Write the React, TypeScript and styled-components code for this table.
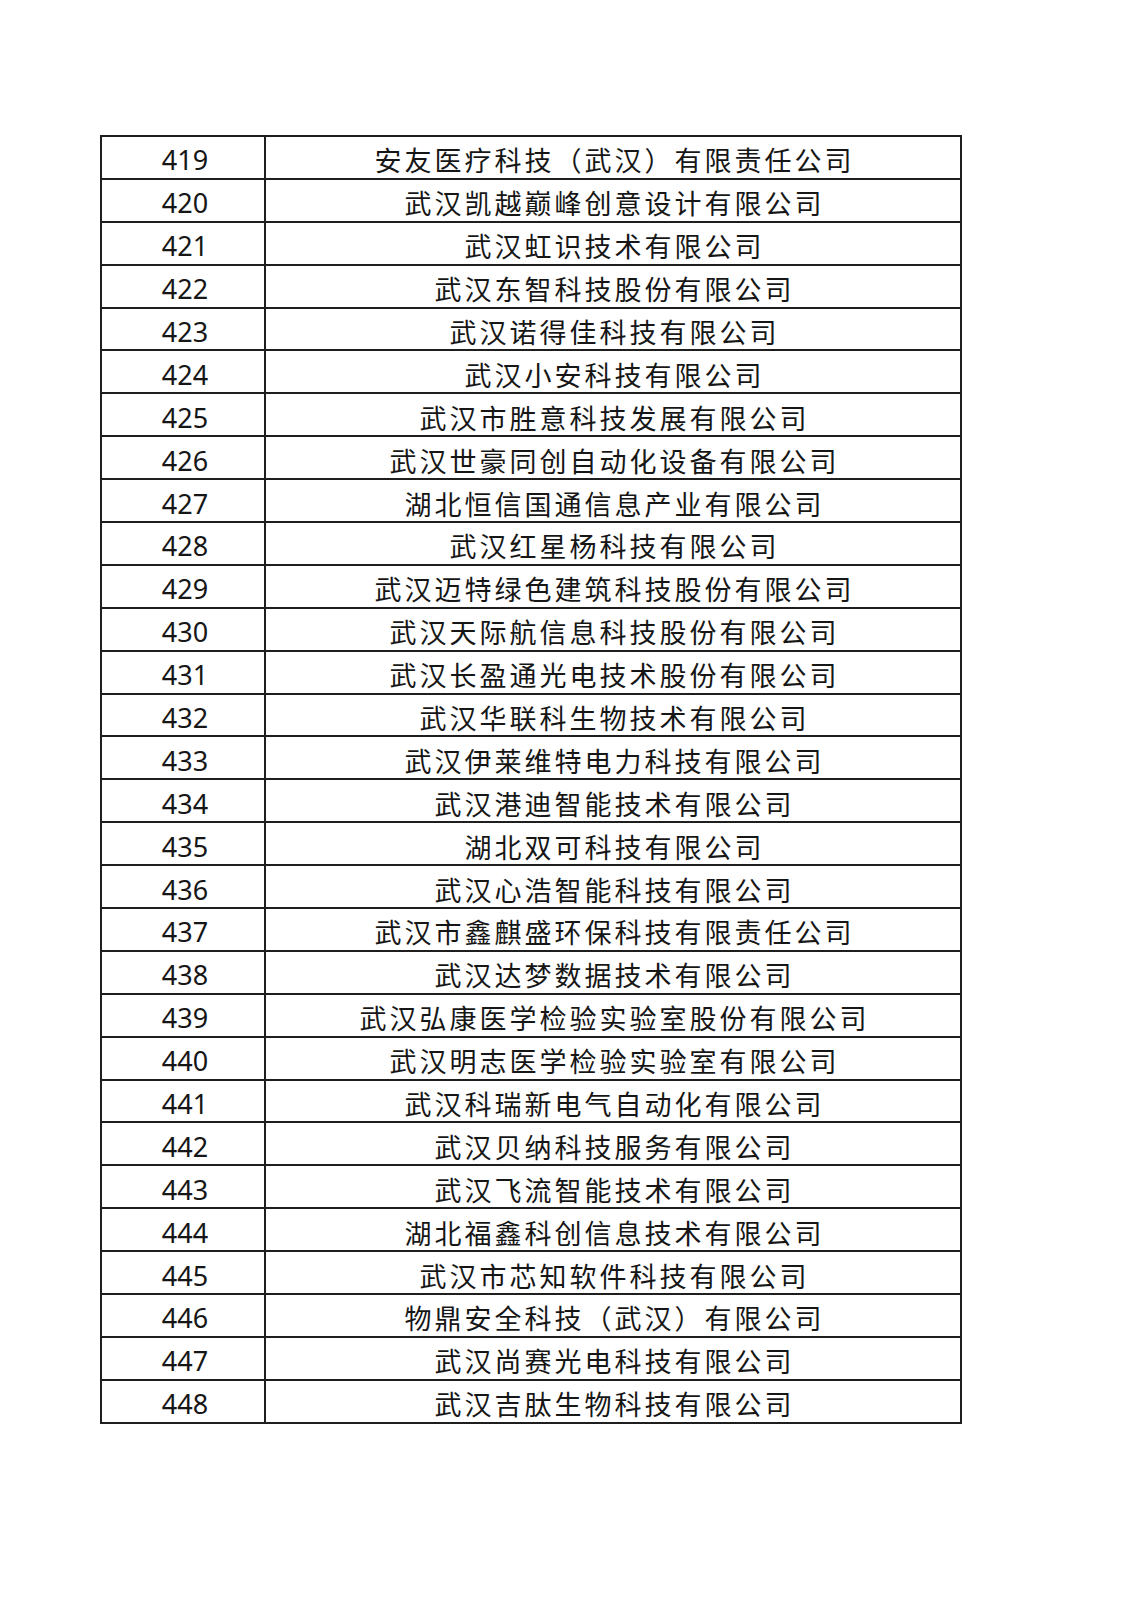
import { createGlobalStyle, styled } from "styled-components";

const companies: [number, string][] = [
  [419, "安友医疗科技（武汉）有限责任公司"],
  [420, "武汉凯越巅峰创意设计有限公司"],
  [421, "武汉虹识技术有限公司"],
  [422, "武汉东智科技股份有限公司"],
  [423, "武汉诺得佳科技有限公司"],
  [424, "武汉小安科技有限公司"],
  [425, "武汉市胜意科技发展有限公司"],
  [426, "武汉世豪同创自动化设备有限公司"],
  [427, "湖北恒信国通信息产业有限公司"],
  [428, "武汉红星杨科技有限公司"],
  [429, "武汉迈特绿色建筑科技股份有限公司"],
  [430, "武汉天际航信息科技股份有限公司"],
  [431, "武汉长盈通光电技术股份有限公司"],
  [432, "武汉华联科生物技术有限公司"],
  [433, "武汉伊莱维特电力科技有限公司"],
  [434, "武汉港迪智能技术有限公司"],
  [435, "湖北双可科技有限公司"],
  [436, "武汉心浩智能科技有限公司"],
  [437, "武汉市鑫麒盛环保科技有限责任公司"],
  [438, "武汉达梦数据技术有限公司"],
  [439, "武汉弘康医学检验实验室股份有限公司"],
  [440, "武汉明志医学检验实验室有限公司"],
  [441, "武汉科瑞新电气自动化有限公司"],
  [442, "武汉贝纳科技服务有限公司"],
  [443, "武汉飞流智能技术有限公司"],
  [444, "湖北福鑫科创信息技术有限公司"],
  [445, "武汉市芯知软件科技有限公司"],
  [446, "物鼎安全科技（武汉）有限公司"],
  [447, "武汉尚赛光电科技有限公司"],
  [448, "武汉吉肽生物科技有限公司"],
];

const GlobalStyle = createGlobalStyle`
  html, body {
    margin: 0;
    padding: 0;
    background: #ffffff;
  }
  body {
    font-family: "Noto Sans", "Noto Sans CJK SC", sans-serif;
    color: #161616;
  }
`;

const Page = styled.div`
  width: 1130px;
  min-height: 1600px;
  padding: 135px 0 0 100px;
  box-sizing: border-box;
`;

const Table = styled.table`
  border-collapse: collapse;
  width: 862px;
  table-layout: fixed;
  border: 2px solid #1e1e1e;
`;

const Row = styled.tr`
  height: 42.9px;
`;

const Cell = styled.td<{ $num?: boolean }>`
  border: 2px solid #1e1e1e;
  padding: 5px 0 0 0;
  text-align: center;
  vertical-align: middle;
  line-height: 1;
  white-space: nowrap;
  font-family: ${(p) =>
    p.$num
      ? `"Noto Sans", "DejaVu Sans", sans-serif`
      : `"Noto Sans CJK SC", sans-serif`};
  font-size: 27px;
  letter-spacing: ${(p) => (p.$num ? "0" : "3px")};
  font-weight: 400;
  text-indent: ${(p) => (p.$num ? "4px" : "3px")};
`;

const NumCol = styled.col`
  width: 164px;
`;

export default function App() {
  return (
    <>
      <GlobalStyle />
      <Page>
        <Table>
          <colgroup>
            <NumCol />
            <col />
          </colgroup>
          <tbody>
            {companies.map(([no, name]) => (
              <Row key={no}>
                <Cell $num>{no}</Cell>
                <Cell>{name}</Cell>
              </Row>
            ))}
          </tbody>
        </Table>
      </Page>
    </>
  );
}
